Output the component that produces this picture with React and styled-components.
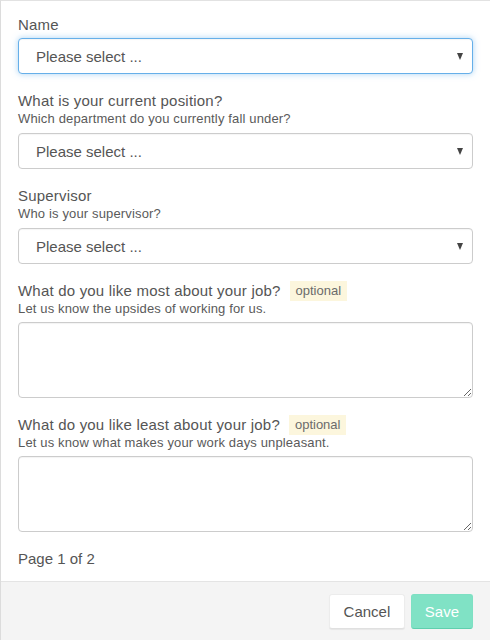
import React from 'react';
import styled, { createGlobalStyle } from 'styled-components';

const GlobalStyle = createGlobalStyle`
    html, body {
        margin: 0;
        padding: 0;
        background: #ffffff;
    }
    body {
        font-family: "Liberation Sans", Arial, sans-serif;
    }
`;

const Panel = styled.div`
    width: 490px;
    height: 640px;
    box-sizing: border-box;
    border-left: 1px solid #dcdcdc;
    border-top: 1px solid #e2e2e2;
    display: flex;
    flex-direction: column;
    overflow: hidden;
`;

const Body = styled.form`
    padding: 14px 17px 12px 17px;
    display: flex;
    flex-direction: column;
`;

const Group = styled.div`
    display: flex;
    flex-direction: column;
    margin-bottom: 17px;
`;

const LabelRow = styled.div`
    display: flex;
    align-items: center;
    height: 20px;
    margin-bottom: ${(p) => (p.$hasHelp ? '0' : '3px')};
`;

const Label = styled.label`
    font-size: 15px;
    color: #555555;
    line-height: 20px;
    letter-spacing: 0.2px;
`;

const Optional = styled.span`
    margin-left: 9px;
    height: 20px;
    line-height: 20px;
    padding: 0 6px;
    background: #fcf6dd;
    color: #6b6b6b;
    font-size: 13px;
`;

const Help = styled.div`
    font-size: 13px;
    color: #5a5a5a;
    line-height: 16px;
    letter-spacing: 0.15px;
    margin-bottom: ${(p) => (p.$tight ? '5px' : '6px')};
`;

const SelectBox = styled.div`
    height: 36px;
    box-sizing: border-box;
    border: 1px solid ${(p) => (p.$focused ? '#66afe9' : '#cccccc')};
    border-radius: 4px;
    box-shadow: ${(p) =>
        p.$focused
            ? 'inset 0 1px 1px rgba(0,0,0,.04), 0 0 6px rgba(102,175,233,.55)'
            : 'inset 0 1px 1px rgba(0,0,0,.04)'};
    display: flex;
    align-items: center;
    justify-content: space-between;
    padding: 0 9px 0 17px;
    background: #ffffff;
    font-size: 15px;
    color: #555555;
`;

const Caret = styled.span`
    width: 0;
    height: 0;
    border-left: 3.5px solid transparent;
    border-right: 3.5px solid transparent;
    border-top: 7px solid #444444;
`;

const TextArea = styled.textarea`
    height: 76px;
    box-sizing: border-box;
    border: 1px solid #cccccc;
    border-radius: 4px;
    box-shadow: inset 0 1px 1px rgba(0,0,0,.05);
    resize: vertical;
    font-family: "Liberation Sans", Arial, sans-serif;
    font-size: 14px;
    outline: none;
    margin: 0;
`;

const PageInfo = styled.div`
    font-size: 15px;
    color: #555555;
    line-height: 20px;
`;

const Footer = styled.div`
    flex: 1;
    background: #f4f4f4;
    border-top: 1px solid #e4e4e4;
    display: flex;
    justify-content: flex-end;
    align-items: flex-start;
    gap: 6px;
    padding: 12px 17px 0 17px;
`;

const Button = styled.button`
    height: 35px;
    padding: 0 ${(p) => (p.$primary ? '13px' : '13.5px')};
    border-radius: 3px;
    font-family: "Liberation Sans", Arial, sans-serif;
    font-size: 15px;
    cursor: pointer;
    border: 1px solid ${(p) => (p.$primary ? '#7ee0c3' : '#ececec')};
    border-bottom-color: ${(p) => (p.$primary ? '#5fcfae' : '#e0e0e0')};
    background: ${(p) => (p.$primary ? '#80e2c5' : '#ffffff')};
    color: ${(p) => (p.$primary ? '#ffffff' : '#555555')};
    box-shadow: ${(p) => (p.$primary ? 'none' : '0 1px 1px rgba(0,0,0,.06)')};
`;

const fields = [
    { label: 'Name', type: 'select', focused: true },
    {
        label: 'What is your current position?',
        help: 'Which department do you currently fall under?',
        type: 'select',
    },
    { label: 'Supervisor', help: 'Who is your supervisor?', type: 'select' },
    {
        label: 'What do you like most about your job?',
        help: 'Let us know the upsides of working for us.',
        type: 'text',
        optional: true,
    },
    {
        label: 'What do you like least about your job?',
        help: 'Let us know what makes your work days unpleasant.',
        type: 'text',
        optional: true,
    },
];

function App() {
    return (
        <>
            <GlobalStyle />
            <Panel>
                <Body onSubmit={(e) => e.preventDefault()}>
                    {fields.map((f) => (
                        <Group key={f.label}>
                            <LabelRow $hasHelp={!!f.help}>
                                <Label>{f.label}</Label>
                                {f.optional && <Optional>optional</Optional>}
                            </LabelRow>
                            {f.help && <Help $tight={f.type === 'text'}>{f.help}</Help>}
                            {f.type === 'select' ? (
                                <SelectBox $focused={f.focused}>
                                    <span>Please select ...</span>
                                    <Caret />
                                </SelectBox>
                            ) : (
                                <TextArea />
                            )}
                        </Group>
                    ))}
                    <PageInfo>Page 1 of 2</PageInfo>
                </Body>
                <Footer>
                    <Button type="button">Cancel</Button>
                    <Button type="button" $primary>
                        Save
                    </Button>
                </Footer>
            </Panel>
        </>
    );
}

export default App;
